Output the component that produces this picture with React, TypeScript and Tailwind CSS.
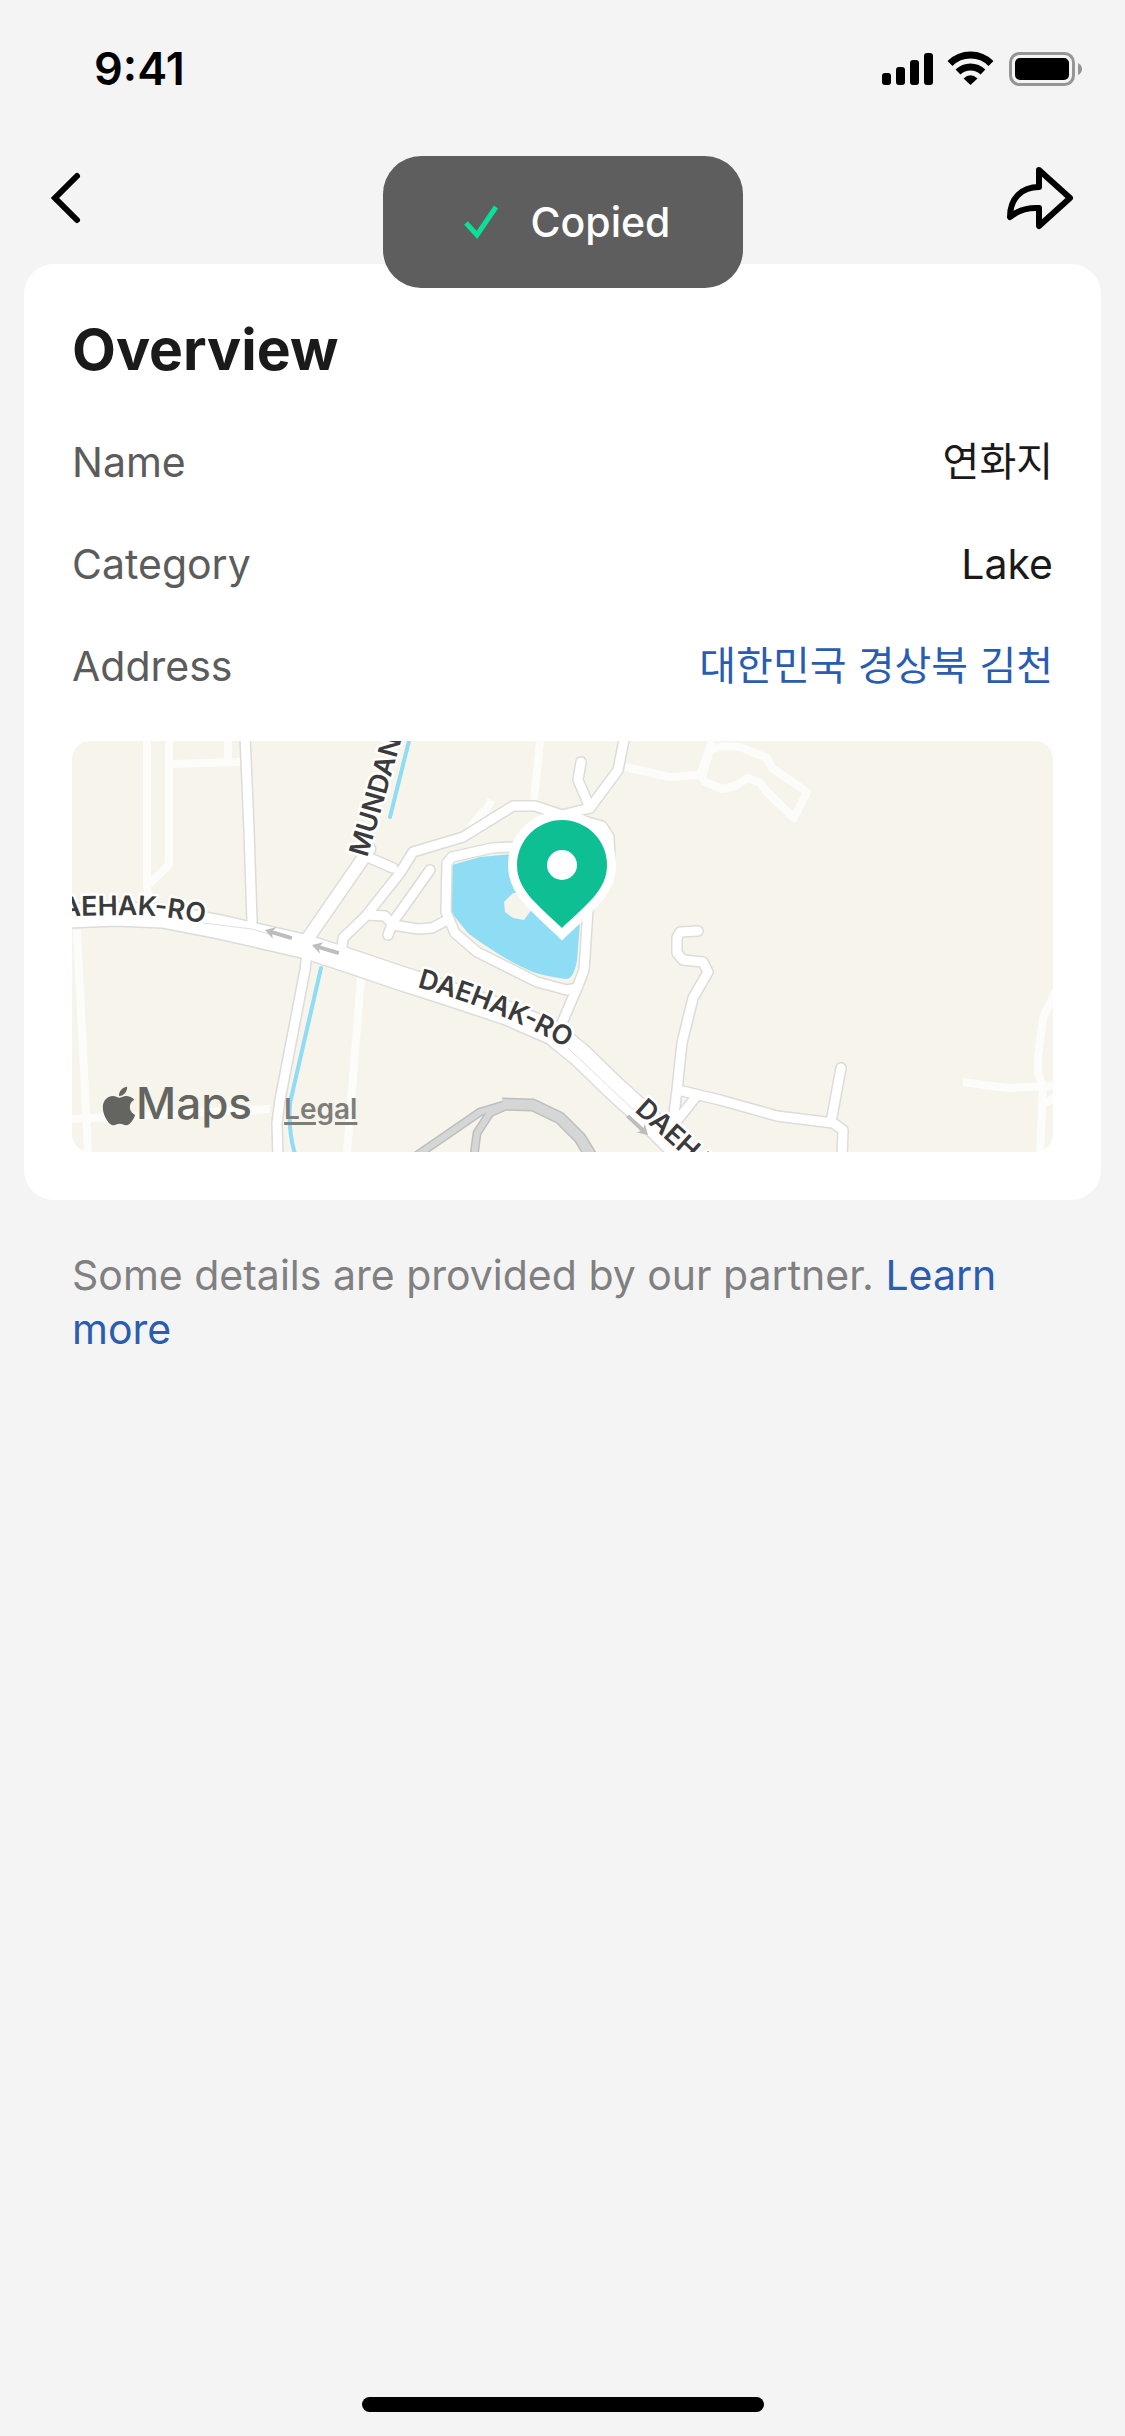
import { FaApple } from "react-icons/fa";

const lanes = [
  "M75 0V146L77 160",
  "M97 0V124L77 143",
  "M101 23L168 21",
  "M156 0V22",
  "M5 189L10 289L16 411",
  "M0 378L198 368",
  "M289 237L275 411",
  "M468 0L462 59",
  "M419 59L416 66L398 86",
  "M553 26L598 36L628 34L636 12L640 0",
  "M638 9L651 5L668 6L695 17L700 27L735 51L722 77L695 51L688 42L676 37L663 45L650 48L633 41L630 36Z",
  "M891 341L935 347L981 345",
  "M984 250L971 276L966 316V332L971 347L968 411",
  "M971 363L984 356",
];

const streets = [
  "M173 -6L177 89L180 180",
  "M235 212L233 229L208 359L205 382L206 417",
  "M298 117L321 127",
  "M270 207L271 197L293 176L328 132L341 111L391 96L441 65H463L490 74L518 67L546 29L553 -6",
  "M509 21L506 39L518 67",
  "M295 174L313 175L321 184L346 188L360 187L377 178",
  "M316 194L321 181L358 129",
  "M440 106L420 107L380 116L375 122L374 171L383 192L405 211L465 241L495 249L505 247L512 229L516 169L522 150L538 122L537 96L530 85L490 74",
  "M505 247L490 282",
  "M626 190L608 191L605 197V212L611 219L631 221L636 231L621 257L610 302L605 349L600 388",
  "M606 349L648 359L705 375L761 382L771 389L770 417",
  "M769 327L759 381",
  "M623 357L603 382",
];

const avenue =
  "M-10 175L45 173L91 175L148 186L235 206L275 219L328 237L375 252L435 272L481 292L508 314L541 346L575 377L620 422";
const mundang = "M234 200L290 119L297 108";

const rails = ["M344 415L408 371L438 362L461 364L488 377L508 397L519 415", "M402 415L405 392L418 372L436 364"];

const arrows = ["translate(193 189) rotate(17)", "translate(240 204) rotate(17)", "translate(576 394) rotate(223)"];

function MapDrawing() {
  return (
    <svg viewBox="0 0 981 411" preserveAspectRatio="xMidYMid slice" className="block h-full w-full" role="img" aria-label="Map">
      <defs>
        <path id="label-west" d="M-50 177L0 175L60 174Q90 174 140 184" />
        <path id="label-mid" d="M345 246Q440 272 520 322" />
        <path id="label-east" d="M562 370L640 440L720 510" />
        <path id="label-north" d="M295 117L309 70L333 -14L350 -74" />
      </defs>
      <rect width="981" height="411" fill="#f6f4eb" />

      <g fill="none" stroke="#fcfcfb" strokeWidth="8" strokeLinejoin="round">
        {lanes.map((d) => (
          <path key={d} d={d} />
        ))}
      </g>

      {/* water */}
      <path
        d="M380 124L408 116L450 112L500 130L508 182L505 219Q502 238 494 238Q472 235 461 231Q440 222 425 212Q400 196 395 191L379 171Z"
        fill="#8fdcf5"
      />
      <path d="M432 161L441 152L451 152L460 168L452 179L441 177L433 171Z" fill="#f6f4eb" />
      <g fill="none" stroke="#8fdcf5" strokeWidth="4" strokeLinecap="round">
        <path d="M338 -4L318 76" />
        <path d="M249 227L218 362Q216 390 223 413" />
      </g>

      {/* railway loop */}
      <g fill="none" strokeLinejoin="round">
        <g stroke="#bdbebe" strokeWidth="9">
          {rails.map((d) => (
            <path key={d} d={d} />
          ))}
          <path d="M430 363L461 364L488 377L508 397L519 415" strokeWidth="13" />
        </g>
        <g stroke="#d5d7d7" strokeWidth="6">
          {rails.map((d) => (
            <path key={d} d={d} />
          ))}
          <path d="M430 363L461 364L488 377L508 397L519 415" strokeWidth="10" />
        </g>
      </g>

      {/* road outlines first, fills on top so junctions merge */}
      <g fill="none" stroke="#dcdcda" strokeLinejoin="round" strokeLinecap="round">
        {streets.map((d) => (
          <path key={d} d={d} strokeWidth="12" />
        ))}
        <path d={mundang} strokeWidth="15" />
        <path d={avenue} strokeWidth="26" />
      </g>
      <g fill="none" stroke="#ffffff" strokeLinejoin="round" strokeLinecap="round">
        {streets.map((d) => (
          <path key={d} d={d} strokeWidth="9" />
        ))}
        <path d={mundang} strokeWidth="12" />
        <path d={avenue} strokeWidth="23" />
      </g>
      <g fill="none" stroke="#e0e0e0" strokeWidth="1">
        <path d="M131 182L180 188L197 193" />
        <path d="M496 307L568 375" />
      </g>

      <g fill="#bdbdbd" stroke="none">
        {arrows.map((t) => (
          <path key={t} transform={t} d="M0 0L10 -6L8 -2H28V2H8L10 6Z" />
        ))}
      </g>

      <g
        className="font-['Inter',sans-serif] text-[27px] font-semibold"
        fill="#3b3b3b"
        stroke="#ffffff"
        strokeWidth="5"
        strokeLinejoin="round"
        paintOrder="stroke"
      >
        <text textAnchor="end">
          <textPath href="#label-west" startOffset="96%">DAEHAK-RO</textPath>
        </text>
        <text>
          <textPath href="#label-mid">DAEHAK-RO</textPath>
        </text>
        <text>
          <textPath href="#label-east">DAEHAK-RO</textPath>
        </text>
        <text>
          <textPath href="#label-north">MUNDANG-RO</textPath>
        </text>
      </g>

      {/* pin */}
      <path
        d="M445 124A45 45 0 0 1 535 124C535 149 515 163 490 187C465 163 445 149 445 124Z"
        fill="#0dbf92"
        stroke="#ffffff"
        strokeWidth="18"
        paintOrder="stroke"
      />
      <circle cx="490" cy="124" r="15" fill="#ffffff" />
    </svg>
  );
}

function StatusIcons() {
  return (
    <svg width="201" height="36" viewBox="0 0 201 36" aria-hidden="true">
      <rect x="1" y="22" width="9" height="12" rx="3" />
      <rect x="15" y="16" width="9" height="18" rx="3" />
      <rect x="29" y="9" width="9" height="25" rx="3" />
      <rect x="43" y="2" width="9" height="32" rx="3" />
      <g fill="none" stroke="#000" strokeWidth="7">
        <path d="M69 12.500A29 29 0 0 1 110 12.500" />
        <path d="M77 21A18 18 0 0 1 102 21" />
      </g>
      <path d="M89.500 34L82.500 27.500Q89.500 21 96.500 27.500Z" />
      <rect x="129.500" y="2.500" width="63" height="31" rx="9" fill="none" stroke="#959595" strokeWidth="3" />
      <rect x="134" y="7" width="54" height="22" rx="5" />
      <path d="M197 12Q201 14 201 18T197 24Z" fill="#959595" />
    </svg>
  );
}

export default function App() {
  return (
    <div className="relative flex min-h-screen flex-col bg-[#f4f4f4] font-['Inter','Noto_Sans_CJK_KR',sans-serif] text-[41px] leading-[54px] text-[#1a1a1a]">
      <div className="flex h-[138px] items-center justify-between pr-[43px] pl-[94px] text-black">
        <span className="text-[45px] font-semibold">9:41</span>
        <StatusIcons />
      </div>

      <header className="mb-[6px] flex h-[120px] items-center justify-between px-12">
        <button type="button" aria-label="Back">
          <svg width="36" height="54" viewBox="0 0 36 54" fill="none" stroke="#000" strokeWidth="6" strokeLinecap="round">
            <path d="M29 5L7 27L29 49" />
          </svg>
        </button>
        <button type="button" aria-label="Share">
          <svg width="72" height="66" viewBox="0 0 72 66" fill="none" stroke="#000" strokeWidth="6" strokeLinejoin="round">
            <path d="M34 5L65 33L34 61V43Q17 42 5 52C5 33 17 22 34 22Z" />
          </svg>
        </button>
      </header>

      <main>
        <section className="mx-6 flex flex-col gap-12 rounded-[30px] bg-white p-12">
          <h1 className="text-[57px] leading-[75px] font-bold">Overview</h1>
          <dl className="flex flex-col gap-12">
            <div className="flex justify-between">
              <dt className="text-[#5c5c5c]">Name</dt>
              <dd className="text-[40px]">연화지</dd>
            </div>
            <div className="flex justify-between">
              <dt className="text-[#5c5c5c]">Category</dt>
              <dd>Lake</dd>
            </div>
            <div className="flex justify-between">
              <dt className="text-[#5c5c5c]">Address</dt>
              <dd className="text-[40px]">
                <a href="#address" className="text-[#2a5db0]">대한민국 경상북 김천</a>
              </dd>
            </div>
          </dl>
          <div className="relative h-[411px] overflow-hidden rounded-[18px]">
            <MapDrawing />
            <div className="absolute bottom-4 left-[30px] flex items-baseline">
              <FaApple className="h-[44px] w-[34px] self-center text-[#646460]" />
              <span className="text-[44px] font-medium text-[#646460]">Maps</span>
              <a href="#legal" className="ml-8 text-[28px] font-semibold text-[#7d7d7a] underline decoration-3 underline-offset-3">
                Legal
              </a>
            </div>
          </div>
        </section>

        <p className="px-18 pt-12 text-[#808080]">
          Some details are provided by our partner.{" "}
          <a href="#learn-more" className="text-[#2a5db0]">Learn more</a>
        </p>
      </main>

      <div className="mx-auto mt-auto mb-6 h-[15px] w-[402px] rounded-full bg-black" />

      <div
        role="status"
        className="absolute top-[156px] left-1/2 flex h-[132px] w-[360px] -translate-x-1/2 items-center justify-center gap-8 rounded-[38px] bg-[#5e5e5e] pl-2 font-medium text-white"
      >
        <svg width="36" height="36" viewBox="0 0 36 36" fill="none" stroke="#0be09b" strokeWidth="5">
          <path d="M3 19L14 31L33 3" />
        </svg>
        Copied
      </div>
    </div>
  );
}
